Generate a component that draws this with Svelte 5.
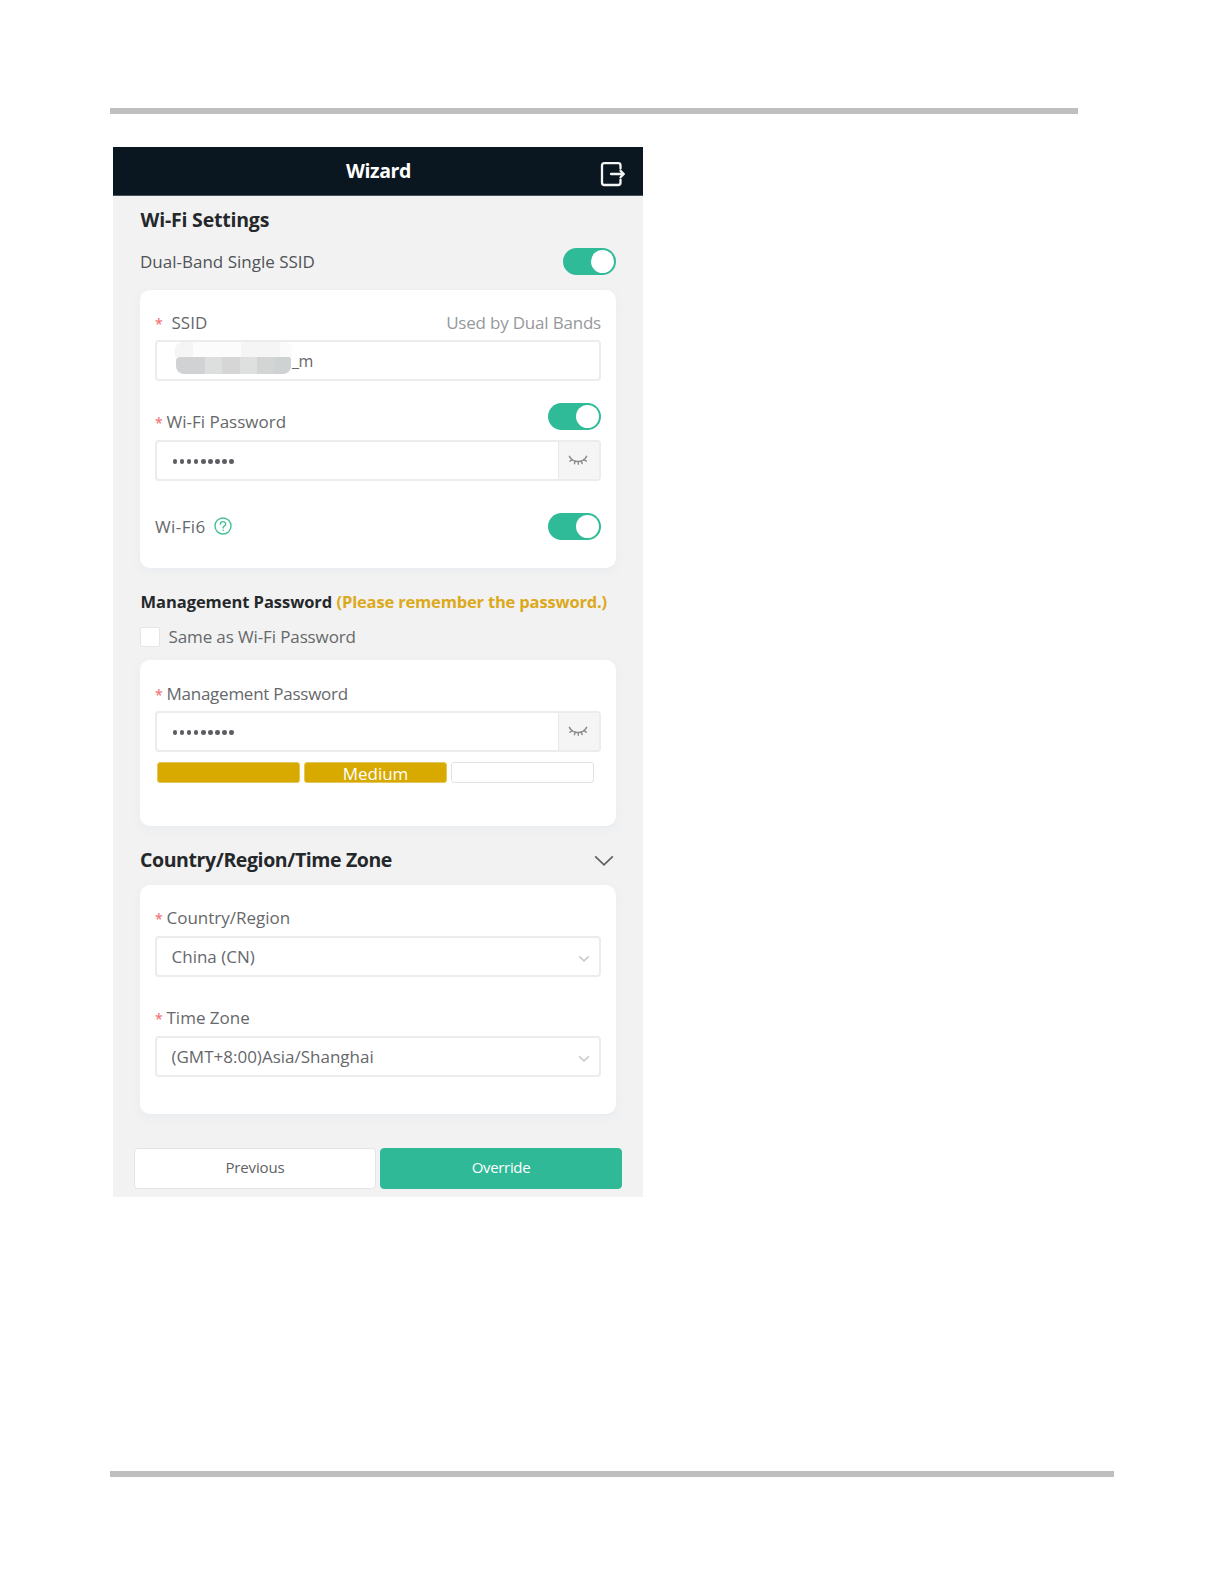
<script>
  let dualBand = $state(true);
  let wifiPassword = $state(true);
  let wifi6 = $state(true);
  const dots = Array.from({ length: 9 });
  const mosaic = ['#d0d2d3', '#dddede', '#d6d6d6', '#dedfdf', '#d3d5d5', '#cfd2d2'];
</script>

{#snippet toggle(on, flip)}
  <button class="toggle" class:on role="switch" aria-checked={on} aria-label="toggle" onclick={flip}>
    <span class="knob"></span>
  </button>
{/snippet}

{#snippet password()}
  <div class="field secret">
    <div class="dots">
      {#each dots as _}<i></i>{/each}
    </div>
    <div class="addon">
      <svg width="20" height="12" viewBox="0 0 20 12" fill="none" stroke="#8c8c8c" stroke-width="1.7" stroke-linecap="round">
        <path d="M1.500 1.500C3 4.600 6 6.500 10 6.500S17 4.600 18.500 1.500" />
        <path d="M4.300 4.600L1.900 6.300M7.300 6.200L6.400 8.800M10.300 6.700V9.200M13.100 6.100L14.200 8.600M15.700 4.600L18.300 6.200" stroke-width="1.4" />
      </svg>
    </div>
  </div>
{/snippet}

<div class="page">
  <div class="rule top"></div>

  <main class="panel">
    <header>
      <h1>Wizard</h1>
      <svg class="exit" width="28" height="28" viewBox="0 0 28 28" fill="none" stroke="#f4f6f6" stroke-width="2.300" stroke-linecap="round" stroke-linejoin="round">
        <path d="M21.500 8.500V5.500Q21.500 3.200 19.200 3.200H5.300Q3 3.200 3 5.500V22.700Q3 25 5.300 25H19.200Q21.500 25 21.500 22.700V19.700" />
        <path d="M12 14H24.500M21.500 10.700L24.800 14L21.500 17.300" />
      </svg>
    </header>

    <div class="content">
      <h2 class="first">Wi-Fi Settings</h2>
      <div class="row dual">
        <span class="dark">Dual-Band Single SSID</span>
        {@render toggle(dualBand, () => (dualBand = !dualBand))}
      </div>

      <section class="card wifi">
        <div class="row label">
          <span class="wide"><b>*</b>SSID</span>
          <span class="hint">Used by Dual Bands</span>
        </div>
        <div class="field ssid">
          <div class="mask">
            <div class="haze"></div>
            <div class="blocks">
              {#each mosaic as c}<i style:background={c}></i>{/each}
            </div>
          </div>
          <span>_m</span>
        </div>
        <div class="row pass">
          <span class="low"><b>*</b>Wi-Fi Password</span>
          {@render toggle(wifiPassword, () => (wifiPassword = !wifiPassword))}
        </div>
        {@render password()}
        <div class="row six">
          <span class="w6">Wi-Fi6
            <svg width="18" height="18" viewBox="0 0 18 18" fill="none" stroke="#45bf9a" stroke-width="1.400" stroke-linecap="round">
              <circle cx="9" cy="9" r="8" />
              <path d="M6.400 7.200C6.400 3.700 11.700 3.900 11.700 6.900C11.700 8.900 9.100 8.800 9.100 11M9.100 13.300V13.500" />
            </svg>
          </span>
          {@render toggle(wifi6, () => (wifi6 = !wifi6))}
        </div>
      </section>

      <h3><span>Management Password</span><em>(Please remember the password.)</em></h3>
      <label class="same"><span class="box"></span><span class="txt">Same as Wi-Fi Password</span></label>

      <section class="card mgmt">
        <div class="row label tight"><span><b>*</b>Management Password</span></div>
        {@render password()}
        <div class="strength">
          <div class="fill"></div>
          <div class="fill">Medium</div>
          <div></div>
        </div>
      </section>

      <div class="row region-head">
        <h2>Country/Region/Time Zone</h2>
        <svg width="20" height="12" viewBox="0 0 20 12" fill="none" stroke="#5f6164" stroke-width="1.700">
          <path d="M1.200 1.300L10 9.800L18.800 1.300" />
        </svg>
      </div>

      <section class="card region">
        <div class="row label"><span><b>*</b>Country/Region</span></div>
        <div class="field select">
          <span>China (CN)</span>
          <svg width="12" height="8" viewBox="0 0 12 8" fill="none" stroke="#c9cbce" stroke-width="1.600"><path d="M1.200 1.300L6 5.900L10.800 1.300" /></svg>
        </div>
        <div class="row label second"><span><b>*</b>Time Zone</span></div>
        <div class="field select tz">
          <span>(GMT+8:00)Asia/Shanghai</span>
          <svg width="12" height="8" viewBox="0 0 12 8" fill="none" stroke="#c9cbce" stroke-width="1.600"><path d="M1.200 1.300L6 5.900L10.800 1.300" /></svg>
        </div>
      </section>
    </div>

    <footer>
      <button class="btn">Previous</button>
      <button class="btn primary">Override</button>
    </footer>
  </main>

  <div class="rule bottom"></div>
</div>

<style>
  :global(body) { background: #fff; }
  .page {
    box-sizing: border-box;
    width: 1224px;
    height: 1584px;
    padding: 108px 110px 107px;
    display: flex;
    flex-direction: column;
    font-family: "Open Sans", "Noto Sans", sans-serif;
    font-size: 17px;
    color: #66686b;
  }
  .page * { box-sizing: border-box; }
  .rule { height: 6px; background: #bfbfbf; flex: none; }
  .rule.top { width: 968px; }
  .rule.bottom { width: 1004px; margin-top: auto; }
  .panel {
    width: 530px;
    height: 1050px;
    margin: 33px 0 0 3px;
    background: #f2f2f2;
    display: flex;
    flex-direction: column;
    flex: none;
  }
  header {
    height: 49px;
    background: #0b1720;
    border-bottom: 1px solid #4a535a;
    display: grid;
    grid-template-columns: 1fr auto 1fr;
    align-items: center;
    padding: 0 15px;
  }
  h1 {
    grid-column: 2;
    margin: 0;
    padding-left: 1px;
    font-size: 19.5px;
    line-height: 48px;
    color: #fff;
    letter-spacing: -0.4px;
  }
  .exit { justify-self: end; margin: 6px 1px 0 0; }
  .content { padding: 0 27px; }
  h2 {
    margin: 0;
    font-size: 19.5px;
    line-height: 46px;
    letter-spacing: -0.4px;
    color: #25282b;
  }
  .first { height: 46px; line-height: 48px; letter-spacing: -0.2px; padding-left: 0.5px; }
  .row { display: flex; justify-content: space-between; align-items: center; }
  .row span { white-space: nowrap; }
  .dual { height: 39px; margin-bottom: 9px; }
  .dark { color: #505357; }
  .toggle {
    flex: none;
    width: 53px;
    height: 27px;
    padding: 2px;
    border: 0;
    border-radius: 14px;
    background: #c4c8cc;
    display: flex;
    align-items: center;
  }
  .toggle.on { background: #2fbb97; justify-content: flex-end; }
  .knob { width: 23px; height: 23px; border-radius: 50%; background: #fff; }
  .card {
    background: #fff;
    border-radius: 10px;
    padding: 0 15px;
    box-shadow: 0 3px 8px rgba(225, 231, 240, 0.6);
  }
  .wifi { height: 278px; padding-top: 15px; }
  .label { height: 35px; }
  b {
    display: inline-block;
    width: 11.5px;
    font-weight: 600;
    font-size: 14px;
    color: #f0777a;
    letter-spacing: 0;
  }
  .wide b { width: 16.5px; }
  .hint { color: #96989c; letter-spacing: -0.2px; }
  .field {
    height: 41px;
    border: 2px solid #ececec;
    border-radius: 4px;
    background: #fff;
    display: flex;
    align-items: center;
  }
  .ssid { padding-left: 18px; }
  .mask { width: 117px; height: 34px; margin-top: -4px; }
  .haze {
    height: 15px;
    border-radius: 8px 8px 0 0;
    background: linear-gradient(90deg, #f5f5f5 0 15%, #fcfcfc 15% 56%, #f5f5f5 56% 90%, #fbfbfb 90%);
  }
  .blocks { height: 17px; width: 115px; margin-left: 1px; display: flex; border-radius: 4px 2px 8px 8px; overflow: hidden; }
  .blocks i { flex: 1; }
  .blocks i:first-child { flex: 1.7; }
  .ssid span { font-size: 16px; letter-spacing: -0.5px; }
  .pass { height: 59px; align-items: flex-start; padding-top: 22px; }
  .low { line-height: 24px; padding-top: 7px; }
  .secret { padding-left: 15px; justify-content: space-between; }
  .dots { display: flex; gap: 2.4px; padding-left: 0.5px; }
  .dots i { width: 4.7px; height: 4.7px; border-radius: 50%; background: #5c5e62; margin-top: 2px; }
  .addon {
    align-self: stretch;
    width: 41px;
    background: #f5f5f5;
    border-left: 1px solid #e8e8e8;
    display: flex;
    align-items: center;
    justify-content: center;
  }
  .addon svg { margin-right: 3px; }
  .six { height: 53px; margin-top: 19px; }
  .w6 { display: flex; align-items: center; gap: 8px; letter-spacing: 0.4px; }
  .w6 svg { margin-bottom: 2px; }
  h3 {
    margin: 18px 0 0;
    height: 29px;
    line-height: 31px;
    font-size: 16.5px;
    letter-spacing: -0.05px;
    color: #25282b;
    display: flex;
    justify-content: space-between;
    padding: 0 9px 0 0.5px;
    white-space: nowrap;
  }
  em { font-style: normal; color: #dca91c; letter-spacing: -0.17px; }
  .same { display: flex; align-items: center; gap: 8px; height: 43px; margin-bottom: 2px; }
  .box { width: 20px; height: 20px; background: #fff; border: 1px solid #e6e6e6; border-radius: 2px; }
  .txt { letter-spacing: -0.12px; margin-top: -1px; padding-left: 0.5px; }
  .mgmt { height: 166px; padding-top: 16px; }
  .tight { letter-spacing: -0.25px; }
  .strength { margin: 10px 7px 0 2px; display: grid; grid-template-columns: repeat(3, 1fr); gap: 4px; }
  .strength div {
    height: 21px;
    border: 1px solid #e2e2e2;
    border-radius: 3px;
    text-align: center;
    line-height: 22px;
    color: #fff;
  }
  .strength .fill { background: #d8aa00; border-color: #e3c65c; }
  .region-head { height: 59px; padding-right: 2px; }
  .region-head h2 { margin-top: 8px; }
  .region-head svg { margin-top: 11px; }
  .region { height: 229px; padding-top: 16px; }
  .region .label span { margin-top: -2px; }
  .second { margin-top: 24px; }
  .select { justify-content: space-between; padding: 0 9px 0 14.5px; }
  .select svg { margin-top: 4px; }
  footer { display: grid; grid-template-columns: 242px 242px; gap: 4px; padding: 34px 0 0 21px; }
  .btn {
    height: 41px;
    padding: 0 0 3px;
    border: 1px solid #e4e4e4;
    border-radius: 4px;
    background: #fff;
    font: 15px "Open Sans", "Noto Sans", sans-serif;
    color: #606266;
    letter-spacing: -0.15px;
  }
  .primary { background: #2fb997; border-color: #2fb997; color: #fff; letter-spacing: -0.35px; }
</style>
